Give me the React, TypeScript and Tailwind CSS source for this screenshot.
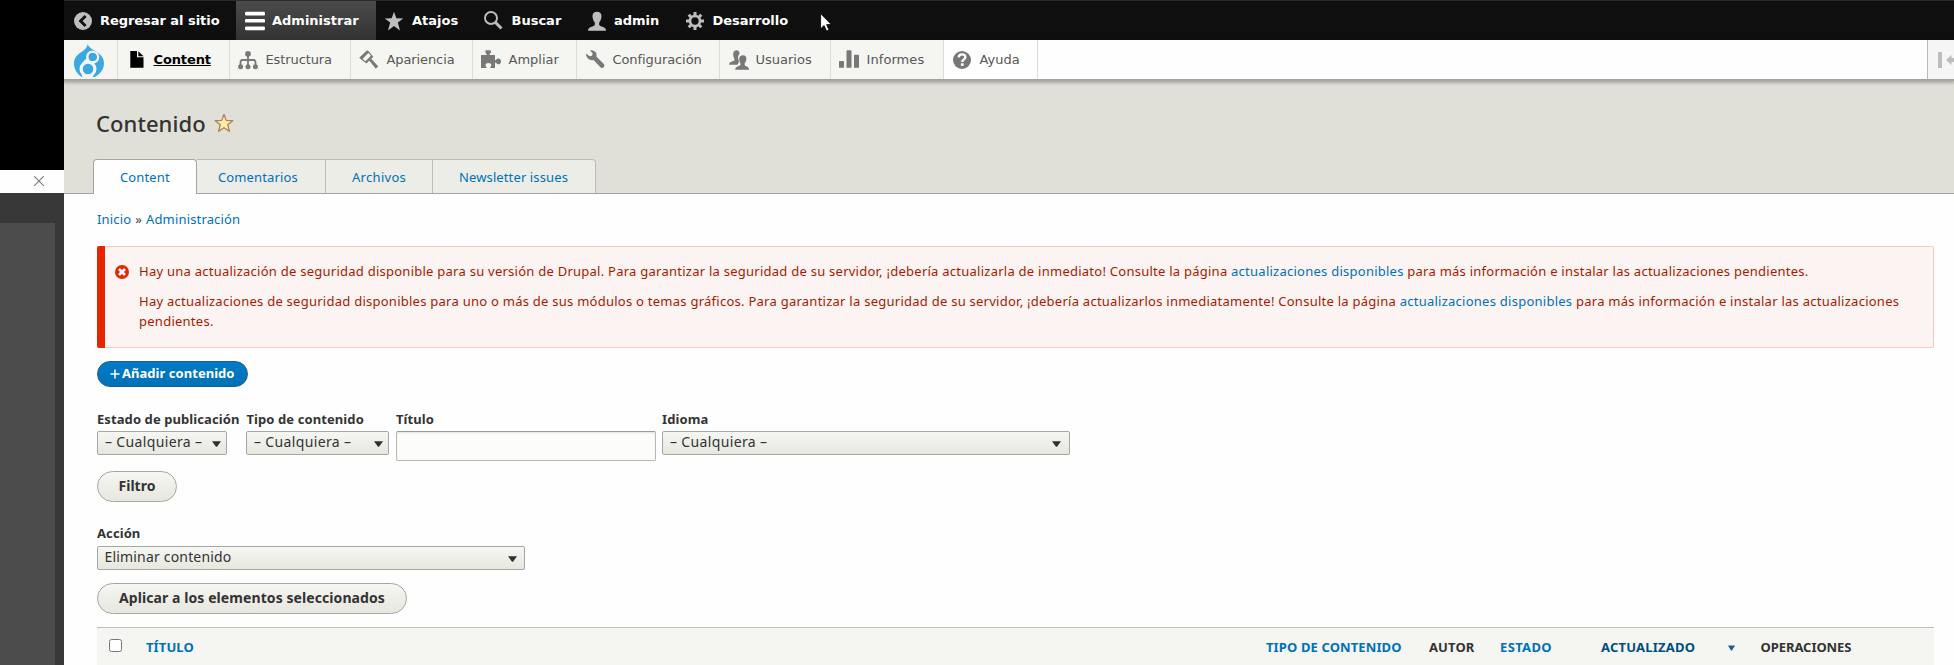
import React from "react";
import type { ReactNode } from "react";

const GRAY = "#bebebe";
const DIM = "#787878";

/* ---------- toolbar icons ---------- */
const BackIcon = () => (
  <svg width="18" height="18" viewBox="0 0 18 18">
    <circle cx="9" cy="9" r="9" fill={GRAY} />
    <path d="M11.6 3.9 6.5 9l5.1 5.1" fill="none" stroke="#0f0f0f" strokeWidth="2.8" />
  </svg>
);
const MenuIcon = () => (
  <svg width="20" height="20" viewBox="0 0 20 20" fill="#fff">
    <rect y="0.8" width="20" height="3.6" rx="1.2" />
    <rect y="8" width="20" height="3.6" rx="1.2" />
    <rect y="15.6" width="20" height="3.6" rx="1.2" />
  </svg>
);
const StarIcon = () => (
  <svg width="20" height="20" viewBox="0 0 20 20" fill={GRAY}>
    <path d="M10 .8 12.3 7.3l7 .2-5.5 4.1 2.2 7.8-6-4.5-6 4.5 2.2-7.8L.7 7.500l7-.2z" />
  </svg>
);
const SearchIcon = () => (
  <svg width="19" height="19" viewBox="0 0 19 19" fill="none" stroke={GRAY}>
    <circle cx="7" cy="7" r="6" strokeWidth="1.9" />
    <path d="m11.500 11.500 6 6" strokeWidth="3" />
  </svg>
);
const PersonIcon = () => (
  <svg width="18" height="20" viewBox="0 0 18 20" fill={GRAY}>
    <path d="M9 .8c2.900 0 4.700 1.900 4.500 4.700-.1 2.600-1.300 4.800-2.300 6v2.300c0 .9 1 1.300 3 2 2.300.8 3.800 1.600 3.800 3.900H0c0-2.300 1.500-3.100 3.800-3.900 2-.7 3-1.100 3-2v-2.300c-1-1.200-2.200-3.400-2.300-6C4.300 2.700 6.100.8 9 .8z" />
  </svg>
);
const GearIcon = () => (
  <svg width="18" height="18" viewBox="0 0 18 18" fill="none" stroke={GRAY}>
    <circle cx="9" cy="9" r="5" strokeWidth="2.700" />
    <g strokeWidth="3">
      <path d="M9 0v3.400M9 14.600V18M0 9h3.400M14.600 9H18M2.700 2.700l2.300 2.300M13 13l2.300 2.300M15.300 2.700 13 5M5 13l-2.300 2.300" />
    </g>
  </svg>
);

/* ---------- tray icons ---------- */
const DrupalLogo = () => (
  <svg width="30" height="33" viewBox="0 0 30 33">
    <defs>
      <clipPath id="drop">
        <path d="M13.700 0c.6 2.200 2 3.600 4.600 5.200C23.500 8.300 30 11.300 30 19.300 30 25.500 25.500 30.500 20.500 33H8C3.500 30.500 0 25.300 0 19.500 0 13.800 3.500 10.500 7.500 8c3.500-2.300 5.700-4.300 6.200-8z" />
      </clipPath>
    </defs>
    <g clipPath="url(#drop)">
      <rect width="30" height="33" fill="#39a9e0" />
      <circle cx="18.700" cy="13" r="5.300" fill="none" stroke="#f5f6f1" strokeWidth="2.600" />
      <path d="M8 20.500c.8-2.700 2.500-4.700 5-6l2 3-4 3z" fill="#f5f6f1" />
      <circle cx="14" cy="25" r="6.900" fill="none" stroke="#f5f6f1" strokeWidth="3.200" />
      <path d="M7.500 30.700h11.800l-.8 2.300H8.500z" fill="#f5f6f1" />
      <circle cx="18.700" cy="13" r="4" fill="#39a9e0" />
    </g>
  </svg>
);
const FileIcon = () => (
  <svg width="20" height="20" viewBox="0 0 20 20" fill="#000">
    <path d="M4.300 1H11v6.300h6.500V17.700H4.300z" />
    <path d="M12.300 1.300 17.600 6.200H12.300z" />
  </svg>
);
const StructureIcon = () => (
  <svg width="20" height="20" viewBox="0 0 20 20" fill={DIM}>
    <circle cx="10" cy="3.800" r="2.900" />
    <path d="M2.500 17V12.200c0-1.500.8-2.200 2-2.200h11c1.200 0 2 .7 2 2.200V17M10 4v13" fill="none" stroke={DIM} strokeWidth="1.800" />
    <circle cx="2.600" cy="16.700" r="2.500" />
    <circle cx="10" cy="16.700" r="2.500" />
    <circle cx="17.400" cy="16.700" r="2.500" />
  </svg>
);
const PaintIcon = () => (
  <svg width="20" height="20" viewBox="0 0 20 20">
    <path d="M8 .3 10.300 2 2.800 9.700.2 7.800z" fill={DIM} />
    <path d="M9 1.300 13.300 6.500 7.200 12.500 2 8.500" fill="none" stroke={DIM} strokeWidth="1.200" />
    <path d="m6 11.700 6.400-6.400 1.800 1.500-6.600 6.500z" fill={DIM} />
    <path d="m10 10.300 1.900-1.900 7.300 7.800-2.400 2.500z" fill={DIM} />
  </svg>
);
const PuzzleIcon = () => (
  <svg width="20" height="20" viewBox="0 0 20 20" fill={DIM}>
    <path d="M0 5h5.800c.3-1-1.500-1.900-1.500-3.300C4.300.5 5 0 5.600.3h2.900C9.200 0 10 .5 10 1.700 10 3.100 8.200 4 8.500 5H14v5.200c1 .3 1.700-1.700 3.300-1.700 1.600 0 2.700 1.200 2.700 2.900s-1.100 2.900-2.700 2.900c-1.600 0-2.300-2-3.300-1.700V18H9.300c-.5-1 1-1.500 1-2.700 0-1.400-1.200-2.300-2.900-2.300s-2.900.9-2.900 2.300c0 1.200 1.500 1.700 1 2.700H0z" />
  </svg>
);
const WrenchIcon = () => (
  <svg width="20" height="20" viewBox="0 0 20 20" fill={DIM}>
    <path d="M5 .4c2.300-.7 4.700.2 5.900 2.200.8 1.400.7 2.700.5 4l7.400 7.300c1.900 2-.9 5.300-3.100 3.500L8.500 10c-1.700.5-3.700.2-5.200-1.200C1.500 7.200.8 5.200 1.300 3.500l3.200 2.700 2.600-.5.500-2.500z" />
  </svg>
);
const PeopleIcon = () => (
  <svg width="20" height="20" viewBox="0 0 20 20" fill={DIM}>
    <path d="M7.500.3c2 0 3.200 1.400 3 3.300 0 .8-.5 1-.8 1.500-.9 1.300-.9 3.500.1 5.400.3.900.2 1.700-.2 2.500l-1.300 1.800H.2c0-2.200 1-2.800 2.700-3.300 1.500-.5 2.500-.8 2.500-1.500V8.700C4.600 7.700 4.200 6 4.200 4c0-2.200 1.300-3.700 3.300-3.700z" />
    <path d="M14 5.300c2.200 0 3.600 1.500 3.400 3.700-.1 1.900-.9 3.400-1.700 4.300V15c0 .7.900 1 2 1.400 1.700.6 2.300 1.300 2.300 3.400H6.200c0-2.100.8-2.800 2.500-3.400 1.100-.4 2.700-.7 2.700-1.400v-1.700c-.6-.9-1.100-2.400-1.200-4.300-.1-2.200 1.600-3.700 3.800-3.700z" />
  </svg>
);
const BarsIcon = () => (
  <svg width="20" height="20" viewBox="0 0 20 20" fill={DIM}>
    <rect x="0" y="11" width="5" height="6.800" rx="0.600" />
    <rect x="7.500" y="0.200" width="5" height="17.600" rx="0.600" />
    <rect x="15" y="4.700" width="5" height="13.100" rx="0.600" />
  </svg>
);
const HelpIcon = () => (
  <svg width="20" height="20" viewBox="0 0 20 20">
    <circle cx="10" cy="10" r="9" fill={DIM} />
    <path d="M6.700 7.400C6.800 5.300 8 4.300 10.100 4.300c2 0 3.300 1.100 3.300 2.700 0 2.500-3.200 2.400-3.200 5.100" fill="none" stroke="#fff" strokeWidth="2.300" />
    <rect x="8.900" y="13.300" width="2.700" height="2.600" fill="#fff" />
  </svg>
);

type Item = { label: string; icon: ReactNode; width: string; iconPad: string; track?: string };

const BAR: Item[] = [
  { label: "Regresar al sitio", icon: <BackIcon />, width: "w-[172px]", iconPad: "pl-[10px]", track: "tracking-[-0.05px]" },
  { label: "Administrar", icon: <MenuIcon />, width: "w-[140px]", iconPad: "pl-[9px]" },
  { label: "Atajos", icon: <StarIcon />, width: "w-[99.500px]", iconPad: "pl-[8px]" },
  { label: "Buscar", icon: <SearchIcon />, width: "w-[102.500px]", iconPad: "pl-[8.500px]" },
  { label: "admin", icon: <PersonIcon />, width: "w-[98.500px]", iconPad: "pl-[10px]" },
  { label: "Desarrollo", icon: <GearIcon />, width: "w-[130px]", iconPad: "pl-[9.500px]" },
];

const TRAY: Item[] = [
  { label: "Content", icon: <FileIcon />, width: "w-[112px]", iconPad: "pl-[8px]", track: "tracking-[-0.12px]" },
  { label: "Estructura", icon: <StructureIcon />, width: "w-[121px]", iconPad: "pl-[8px]", track: "tracking-[-0.1px]" },
  { label: "Apariencia", icon: <PaintIcon />, width: "w-[122px]", iconPad: "pl-[8px]", track: "tracking-[-0.1px]" },
  { label: "Ampliar", icon: <PuzzleIcon />, width: "w-[104px]", iconPad: "pl-[8px]" },
  { label: "Configuración", icon: <WrenchIcon />, width: "w-[143px]", iconPad: "pl-[8px]", track: "tracking-[-0.08px]" },
  { label: "Usuarios", icon: <PeopleIcon />, width: "w-[111px]", iconPad: "pl-[9px]" },
  { label: "Informes", icon: <BarsIcon />, width: "w-[113px]", iconPad: "pl-[8px]", track: "tracking-[0.08px]" },
  { label: "Ayuda", icon: <HelpIcon />, width: "w-[94px]", iconPad: "pl-[8px]" },
];

const TABS = [
  { label: "Content", width: "w-[104px]", text: "pl-[26px]" },
  { label: "Comentarios", width: "w-[129px]", text: "pl-[21px]" },
  { label: "Archivos", width: "w-[107px]", text: "pl-[26px] tracking-[0.300px]" },
  { label: "Newsletter issues", width: "w-[163px]", text: "pl-[26px]" },
];

function Arrow() {
  return (
    <svg width="9" height="6" viewBox="0 0 9 6" className="mt-[2px]">
      <path d="M0 .3h9L5 5.700H4z" fill="#2f2f2f" />
    </svg>
  );
}

function Select({ text, className, track }: { text: string; className: string; track: string }) {
  return (
    <div
      className={`flex h-[24px] items-center justify-between rounded-[2px] border border-[#a6a6a6] bg-linear-to-b from-[#f6f6f3] to-[#e7e7df] text-[14px] leading-[22px] whitespace-nowrap ${className}`}
    >
      <span className={`-mt-[2px] ${track}`}>{text}</span>
      <Arrow />
    </div>
  );
}

function Label({ children, className = "h-[22px]" }: { children: ReactNode; className?: string }) {
  return <div className={`text-[13px] leading-[20px] font-bold tracking-[0.090px] whitespace-nowrap ${className}`}>{children}</div>;
}

function Button({ children, className }: { children: ReactNode; className: string }) {
  return (
    <div
      className={`flex h-[31px] items-center justify-center rounded-full border border-[#a6a6a6] bg-linear-to-b from-[#f6f6f3] to-[#e7e7df] text-[14px] leading-[20px] font-bold whitespace-nowrap text-[#333] ${className}`}
    >
      <span className="-mt-[2px]">{children}</span>
    </div>
  );
}

export default function App() {
  return (
    <div className="relative flex h-[665px] w-[1954px] overflow-hidden bg-[#fefefe] font-['Noto_Sans',sans-serif] text-[#333]">
      {/* window strip at the left */}
      <div className="flex w-[64px] shrink-0 flex-col bg-[#383838]">
        <div className="h-[170px] bg-black" />
        <div className="flex h-[23px] items-center bg-[#fefefe] pl-[34px]">
          <svg width="10" height="10" viewBox="0 0 10 10" className="-mt-[2px]">
            <path d="m0 0 10 10M10 0 0 10" stroke="#7a7a7a" strokeWidth="1.100" />
          </svg>
        </div>
        <div className="h-[30px]" />
        <div className="w-[55px] grow bg-[#4c4c4c]" />
      </div>

      <div className="flex w-[1890px] flex-col">
        {/* toolbar */}
        <div className="flex h-[40px] border-t border-[#2a2a2a] bg-[#0f0f0f] font-['DejaVu_Sans',sans-serif] text-[13px] font-bold text-white">
          {BAR.map((item) => (
            <div
              key={item.label}
              className={`flex h-[39px] shrink-0 items-center ${item.width} ${
                item.label === "Administrar" ? "bg-linear-to-b from-[#4b4b4b] to-[#323232]" : ""
              }`}
            >
              <span className={`w-[36px] shrink-0 ${item.iconPad}`}>{item.icon}</span>
              <span className={`leading-[39px] whitespace-nowrap ${item.track ?? ""}`}>{item.label}</span>
            </div>
          ))}
        </div>

        {/* tray */}
        <div className="z-10 flex h-[39px] bg-[#fefefe] font-['DejaVu_Sans',sans-serif] text-[13px] text-[#565656] shadow-[0_1px_0_#a3a39e,0_2px_0_#a9a9a3,0_3px_3px_1px_rgba(0,0,0,0.25)]">
          <div className="w-[54px] shrink-0 border-r border-[#ddd] bg-[#f5f6f1] pt-[4px] pl-[10px]">
            <DrupalLogo />
          </div>
          {TRAY.map((item) => (
            <div
              key={item.label}
              className={`flex shrink-0 items-center border-r border-[#ddd] ${item.width} ${
                item.label === "Ayuda" ? "" : "bg-[#f5f6f1]"
              }`}
            >
              <span className={`w-[35.500px] shrink-0 ${item.iconPad}`}>{item.icon}</span>
              <span
                className={`leading-[39px] whitespace-nowrap ${item.track ?? ""} ${
                  item.label === "Content" ? "font-bold text-black underline decoration-1 underline-offset-1" : ""
                }`}
              >
                {item.label}
              </span>
            </div>
          ))}
          <div className="ml-auto flex w-[27px] items-center overflow-hidden border-l border-[#bbb] bg-[#f5f5f5] pl-[10px]">
            <svg width="24" height="16" viewBox="0 0 24 16" fill="#bcbcbc" className="shrink-0">
              <rect width="4" height="16" rx="0.500" />
              <path d="m8 8 5.500-5v3H20v4h-6.500v3z" />
            </svg>
          </div>
        </div>

        {/* page header */}
        <div className="flex h-[115px] shrink-0 flex-col border-b border-[#a6a6a0] bg-[#e0e0d8] pl-[29px]">
          <div className="flex h-[80px] items-center pt-[7px] pl-[3px]">
            <h1 className="text-[22px] leading-[30px] font-medium tracking-[0.070px]">Contenido</h1>
            <svg width="20" height="20" viewBox="0 0 20 20" className="ml-[8px]">
              <path
                d="m10 1.400 2.200 6 6.500.3-5 4 1.700 6.600L10 14.700l-5.400 3.600 1.700-6.600-5-4 6.500-.3z"
                fill="#fdeea8"
                stroke="#ae7f4e"
                strokeWidth="1.300"
                strokeLinejoin="round"
              />
            </svg>
          </div>
          <div className="-mb-px flex h-[35px] text-[13px] leading-[35px] text-[#0071b8]">
            {TABS.map((tab, i) => (
              <div
                key={tab.label}
                className={`tracking-[0.120px] whitespace-nowrap ${tab.width} ${tab.text} ${
                  i === 0
                    ? "rounded-t-[4px] border border-b-0 border-[#a6a6a0] bg-[#fefefe]"
                    : "h-[34px] border-t border-r border-[#bcbcb6] bg-[#ecede6]"
                } ${i === 3 ? "rounded-tr-[4px]" : ""}`}
              >
                {tab.label}
              </div>
            ))}
          </div>
        </div>

        {/* content */}
        <div className="flex flex-col px-[33px] pr-[20px]">
          <div className="mt-[15px] flex h-[37px] gap-[4px] text-[13px] leading-[20px] tracking-[0.160px] text-[#0071b8]">
            <span>Inicio</span>
            <span className="text-[#444]">»</span>
            <span>Administración</span>
          </div>

          <div className="flex h-[102px] shrink-0 rounded-[2px] border border-l-0 border-[#f9c9bf] bg-[#fcf4f2] text-[13px] leading-[20px] tracking-[0.251px] text-[#a51b00]">
            <div className="-my-px w-[8px] shrink-0 rounded-l-[2px] bg-[#e62600]" />
            <div className="w-[34px] shrink-0 pt-[18px] pl-[10px]">
              <svg width="14" height="14" viewBox="0 0 14 14">
                <circle cx="7" cy="7" r="7" fill="#e32700" />
                <path d="m4 4 6 6m0-6-6 6" stroke="#fff" strokeWidth="2.600" />
              </svg>
            </div>
            <div className="pt-[14px] whitespace-nowrap">
              <p className="mb-[10px]">
                Hay una actualización de seguridad disponible para su versión de Drupal. Para garantizar la seguridad de su servidor, ¡debería
                actualizarla de inmediato! Consulte la página <span className="text-[#0071b8]">actualizaciones disponibles</span> para más
                información e instalar las actualizaciones pendientes.
              </p>
              <p className="tracking-[0.255px]">
                Hay actualizaciones de seguridad disponibles para uno o más de sus módulos o temas gráficos. Para garantizar la seguridad de su
                servidor, ¡debería actualizarlos inmediatamente! Consulte la página{" "}
                <span className="text-[#0071b8]">actualizaciones disponibles</span> para más información e instalar las actualizaciones
                <br />
                pendientes.
              </p>
            </div>
          </div>

          <div className="mt-[13px] flex h-[26px] w-[151px] items-center rounded-full border border-[#1e5c90] bg-linear-to-b from-[#007bc6] to-[#0071b8] pl-[12px] text-[13px] leading-[20px] font-bold text-white">
            <svg width="10" height="10" viewBox="0 0 10 10" className="mr-[2px] -mt-[1px]">
              <path d="M5 .5v9M.5 5h9" stroke="#fff" strokeWidth="1.500" />
            </svg>
            <span className="-mt-[2px] tracking-[0.040px] whitespace-nowrap">Añadir contenido</span>
          </div>

          {/* filters */}
          <div className="mt-[22px] flex h-[62px]">
            <div className="w-[149px]">
              <Label>Estado de publicación</Label>
              <Select text="– Cualquiera –" className="w-[130px] pr-[5px] pl-[7px]" track="tracking-[0.350px]" />
            </div>
            <div className="w-[150px]">
              <Label className="h-[22px] pl-[0.500px]">Tipo de contenido</Label>
              <Select text="– Cualquiera –" className="w-[143px] pr-[5px] pl-[7px]" track="tracking-[0.350px]" />
            </div>
            <div className="w-[266px]">
              <Label>Título</Label>
              <div className="h-[30px] w-[260px] rounded-[2px] border border-[#b8b8b8] border-t-[#999] bg-[#fcfcfa] shadow-[inset_0_1px_2px_rgba(0,0,0,0.1)]" />
            </div>
            <div>
              <Label>Idioma</Label>
              <Select text="– Cualquiera –" className="w-[408px] pr-[8px] pl-[7px]" track="tracking-[0.350px]" />
            </div>
          </div>
          <Button className="w-[80px]">Filtro</Button>

          {/* bulk action */}
          <div className="mt-[21px]">
            <Label className="h-[23px]">Acción</Label>
            <Select text="Eliminar contenido" className="w-[428px] pr-[7px] pl-[6.500px]" track="tracking-[0.180px]" />
          </div>
          <Button className="mt-[13px] w-[310px] tracking-[0.080px]">Aplicar a los elementos seleccionados</Button>

          {/* table header */}
          <div className="mt-[13px] flex h-[40px] border-t border-[#bfbfba] bg-[#f5f6f1] pl-[12px] text-[13px] leading-[39px] font-bold tracking-[0.120px] whitespace-nowrap text-[#0071b8]">
            <div className="w-[37px] shrink-0 pt-[11px]">
              <div className="h-[13px] w-[13px] rounded-[2.500px] border border-[#767676] bg-white" />
            </div>
            <div className="w-[1120px]">TÍTULO</div>
            <div className="w-[163px]">TIPO DE CONTENIDO</div>
            <div className="w-[71px] text-[#333]">AUTOR</div>
            <div className="w-[101px] tracking-[0.350px]">ESTADO</div>
            <div className="flex w-[159.500px] items-center tracking-[0.200px] text-[#004f80]">
              <span className="w-[127px]">ACTUALIZADO</span>
              <svg width="7" height="6" viewBox="0 0 7 6">
                <path d="M0 .5h7L4 5.500H3z" fill="#1d5d93" />
              </svg>
            </div>
            <div className="tracking-[-0.060px] text-[#333]">OPERACIONES</div>
          </div>
        </div>
      </div>

      {/* mouse pointer */}
      <svg width="13" height="20" viewBox="0 0 13 20" className="absolute top-[13px] left-[820px]">
        <path d="M.6.6v15.200l3.500-3.300 2.400 5.600 2.500-1.100-2.400-5.400h4.700z" fill="#fff" stroke="#000" strokeWidth="0.800" />
      </svg>
    </div>
  );
}
